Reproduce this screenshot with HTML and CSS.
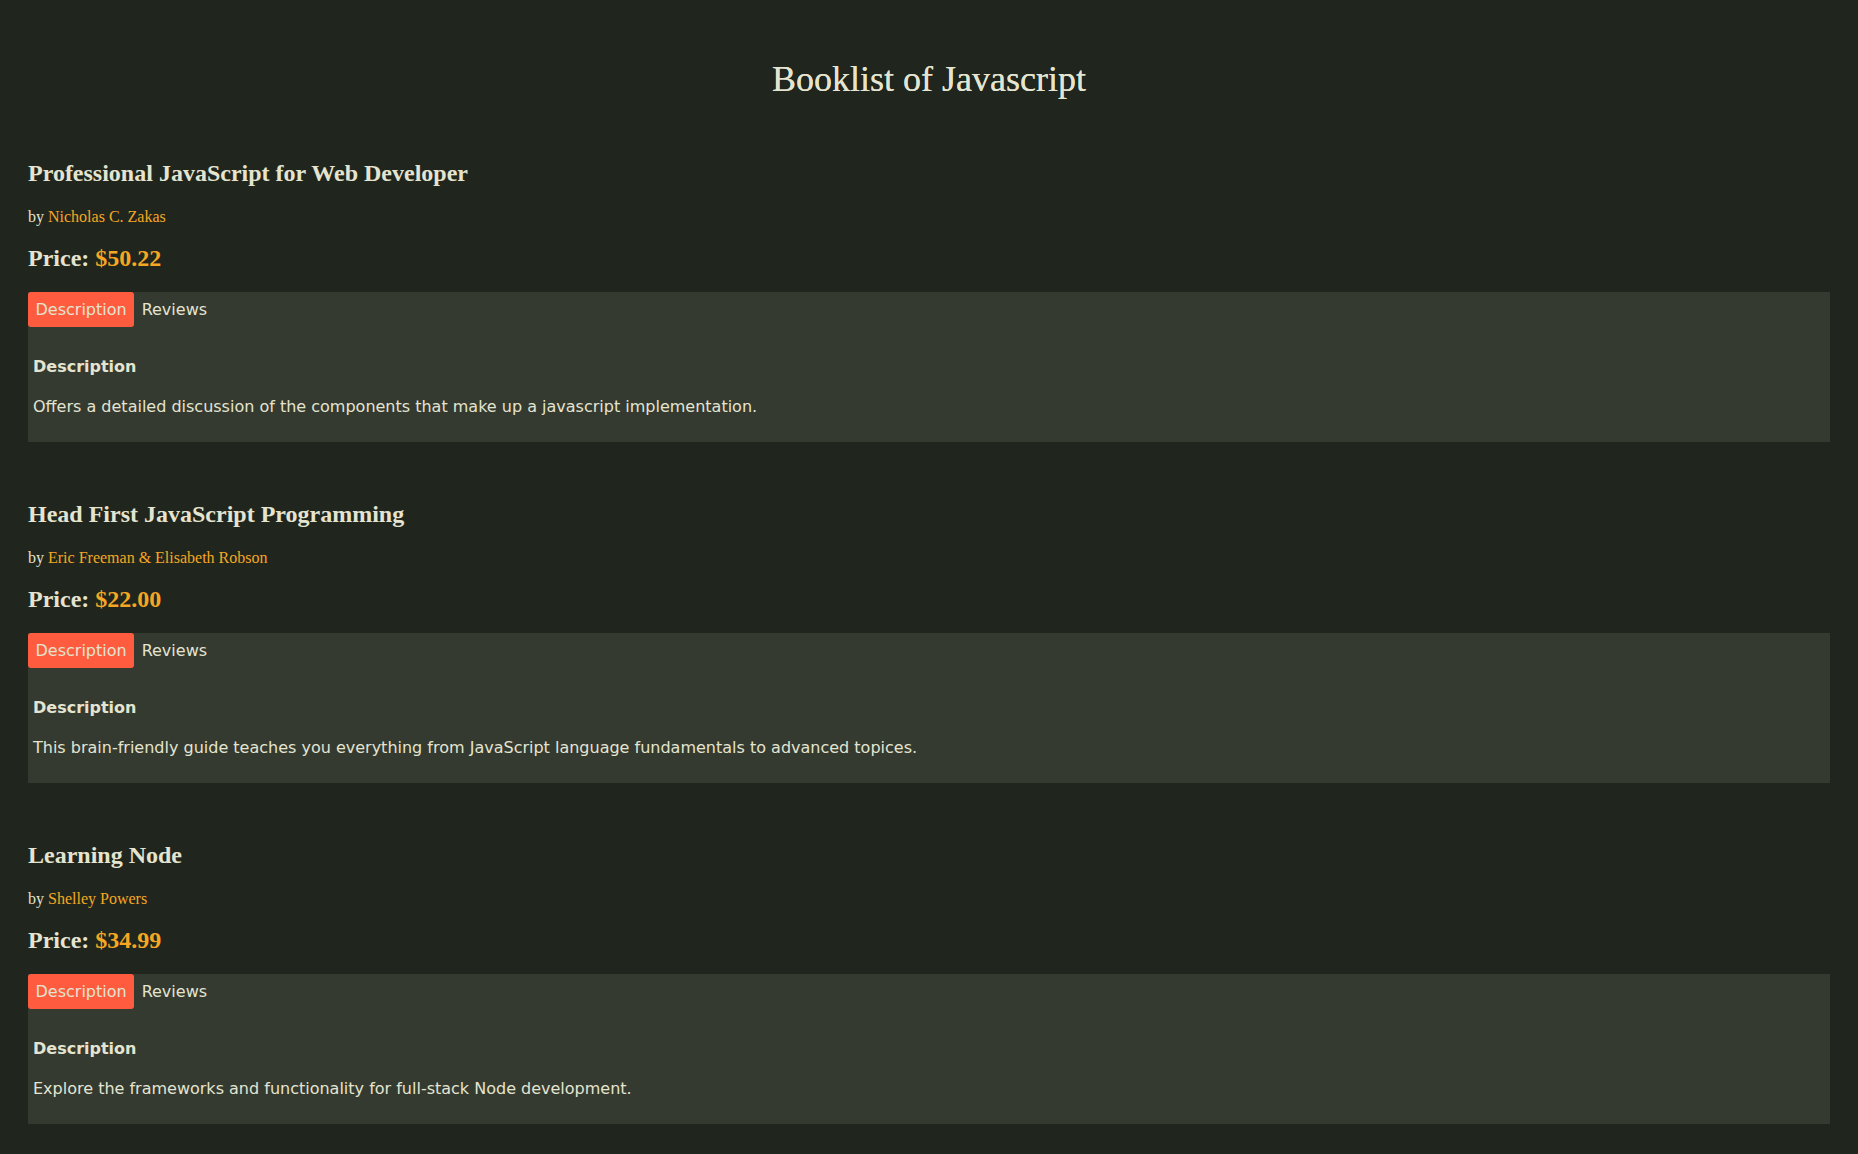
FILE: index.html
```html
<!DOCTYPE html>
<html lang="en">
<head>
<meta charset="utf-8">
<title>Booklist of Javascript</title>
<link rel="stylesheet" href="styles.css">
</head>
<body>
<h1 class="page-title">Booklist of Javascript</h1>

<section class="book">
  <h2 class="book-title">Professional JavaScript for Web Developer</h2>
  <p class="book-author">by <span class="accent">Nicholas C. Zakas</span></p>
  <p class="book-price">Price: <span class="accent">$50.22</span></p>
  <div class="panel">
    <div class="tabs"><span class="tab active">Description</span><span class="tab">Reviews</span></div>
    <h3 class="panel-heading">Description</h3>
    <p class="panel-text">Offers a detailed discussion of the components that make up a javascript implementation.</p>
  </div>
</section>

<section class="book">
  <h2 class="book-title">Head First JavaScript Programming</h2>
  <p class="book-author">by <span class="accent">Eric Freeman &amp; Elisabeth Robson</span></p>
  <p class="book-price">Price: <span class="accent">$22.00</span></p>
  <div class="panel">
    <div class="tabs"><span class="tab active">Description</span><span class="tab">Reviews</span></div>
    <h3 class="panel-heading">Description</h3>
    <p class="panel-text">This brain-friendly guide teaches you everything from JavaScript language fundamentals to advanced topices.</p>
  </div>
</section>

<section class="book">
  <h2 class="book-title">Learning Node</h2>
  <p class="book-author">by <span class="accent">Shelley Powers</span></p>
  <p class="book-price">Price: <span class="accent">$34.99</span></p>
  <div class="panel">
    <div class="tabs"><span class="tab active">Description</span><span class="tab">Reviews</span></div>
    <h3 class="panel-heading">Description</h3>
    <p class="panel-text">Explore the frameworks and functionality for full-stack Node development.</p>
  </div>
</section>
</body>
</html>
```
FILE: styles.css
```css
html, body {
  background: #20261e;
}
body {
  margin: 0;
  padding: 0 28px 28px;
  color: #e4e4d0;
  font-family: "Liberation Serif", serif;
}
.page-title {
  margin: 60px 0 0;
  text-align: center;
  font-family: "Liberation Serif", serif;
  font-weight: normal;
  font-size: 36px;
  line-height: 38px;
  text-shadow: 0 0 0.4px #e4e4d0;
}
.book {
  margin-top: 61px;
}
.book + .book {
  margin-top: 58px;
}
.book-title {
  margin: 0;
  font-size: 24px;
  line-height: 28px;
  font-weight: bold;
}
.book-author {
  margin: 21px 0 0;
  font-size: 16px;
  line-height: 18px;
}
.book-price {
  margin: 18px 0 0;
  font-size: 24px;
  line-height: 28px;
  font-weight: bold;
}
.accent {
  color: #f5a623;
}
.panel {
  margin-top: 20px;
  background: #343a30;
  padding-bottom: 25px;
  font-family: "DejaVu Sans", Verdana, sans-serif;
}
.tabs {
  display: flex;
  height: 35px;
}
.tab {
  display: flex;
  align-items: center;
  padding: 0 7.5px;
  font-size: 16px;
  color: #e4e4d0;
}
.tab.active {
  background: #ff5c3f;
  border-radius: 3px;
}
.panel-heading {
  margin: 30px 0 0;
  padding-left: 5px;
  font-size: 16px;
  line-height: 20px;
  font-weight: bold;
}
.panel-text {
  margin: 20px 0 0;
  padding-left: 5px;
  font-size: 16px;
  line-height: 20px;
}
```
